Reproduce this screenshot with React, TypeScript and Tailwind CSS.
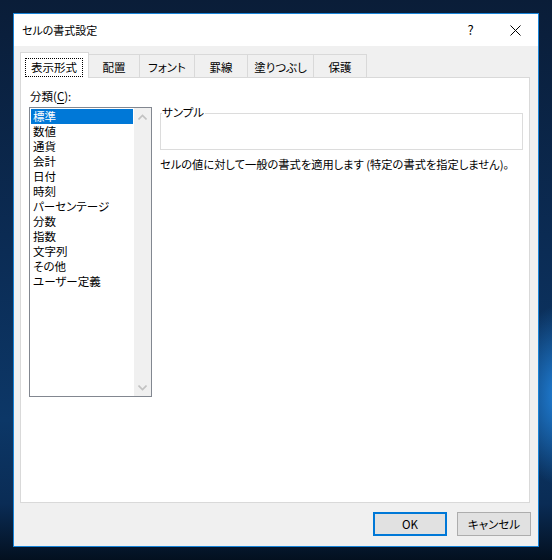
import React from "react";

const categories = [
  "標準",
  "数値",
  "通貨",
  "会計",
  "日付",
  "時刻",
  "パーセンテージ",
  "分数",
  "指数",
  "文字列",
  "その他",
  "ユーザー定義",
];

const tabs = [
  { label: "配置", w: "w-[51px]" },
  { label: "フォント", w: "w-[55px]" },
  { label: "罫線", w: "w-[53px]" },
  { label: "塗りつぶし", w: "w-[66px]" },
  { label: "保護", w: "w-[53px]" },
];

const Chevron: React.FC<{ down?: boolean }> = ({ down }) => (
  <svg width="9" height="6" viewBox="0 0 9 6" className="block">
    <polyline
      points={down ? "0.5,0.5 4.5,4.5 8.5,0.5" : "0.5,5.5 4.5,1.5 8.5,5.5"}
      fill="none"
      stroke="#c2c2c2"
      strokeWidth="1.6"
    />
  </svg>
);

const App: React.FC = () => {
  return (
    <div className="w-[552px] h-[560px] overflow-hidden pt-[13px] pl-[13px] bg-[image:radial-gradient(ellipse_50px_90px_at_560px_395px,#2080d8,transparent),linear-gradient(180deg,#0a1d38_0%,#0b2c55_45%,#0c3767_75%,#0a2c55_90%,#03101f_100%)] text-black text-[11.5px] font-['Noto_Sans_CJK_JP',sans-serif] [font-feature-settings:'palt']">
      <div className="w-[526px] h-[534px] border border-[#1883d7] bg-[#f0f0f0] flex flex-col">
        {/* title bar */}
        <div className="h-[32px] bg-white flex items-center">
          <span className="pl-[8px] leading-[15px] text-[11px]">セルの書式設定</span>
          <div className="ml-auto flex h-full">
            <div className="w-[45px] h-full flex items-center justify-center text-[13px]">?</div>
            <div className="w-[45px] h-full flex items-center justify-center">
              <svg width="11" height="11" viewBox="0 0 11 11">
                <line x1="0.5" y1="0.5" x2="10.5" y2="10.5" stroke="#000" strokeWidth="1" />
                <line x1="10.5" y1="0.5" x2="0.5" y2="10.5" stroke="#000" strokeWidth="1" />
              </svg>
            </div>
          </div>
        </div>

        {/* tabs + panel */}
        <div className="pl-[6px] pr-[8px] pt-[6px]">
          <div className="flex items-end">
            <div className="relative z-10 -mb-[1px] h-[26px] bg-white border-l border-t border-r border-[#d9d9d9] pt-[5px] pl-[4px] pr-[5px]">
              <div className="w-[58px] h-[19px] border border-dotted border-black flex items-center justify-center leading-[15px]">
                表示形式
              </div>
            </div>
            {tabs.map((t) => (
              <div
                key={t.label}
                className={`${t.w} h-[23px] border-t border-r border-[#d9d9d9] flex items-center justify-center pt-[2px] leading-[15px]`}
              >
                {t.label}
              </div>
            ))}
          </div>

          <div className="w-[510px] h-[426px] border border-[#d9d9d9] bg-white flex">
            {/* category column */}
            <div className="ml-[8px] flex flex-col">
              <div className="mt-[11px] pl-[1px] leading-[15px]">
                分類(<span className="underline underline-offset-2">C</span>):
              </div>
              <div className="mt-[3px] w-[123px] h-[290px] border border-[#828790] flex">
                <div className="flex-1 p-[1px]">
                  {categories.map((c, i) => (
                    <div
                      key={c}
                      className={
                        i === 0
                          ? "h-[15px] leading-[15px] pl-[2px] bg-[#0078d7] text-white"
                          : "h-[15px] leading-[15px] pl-[2px]"
                      }
                    >
                      {c}
                    </div>
                  ))}
                </div>
                <div className="w-[17px] bg-[#f0f0f0] flex flex-col justify-between">
                  <div className="h-[17px] flex items-center justify-center">
                    <Chevron />
                  </div>
                  <div className="h-[17px] flex items-center justify-center">
                    <Chevron down />
                  </div>
                </div>
              </div>
            </div>

            {/* sample + description */}
            <div className="ml-[8px] flex flex-col">
              <div className="relative mt-[35px] w-[363px] h-[37px] border border-[#dcdcdc]">
                <span className="absolute -top-[9px] left-[1px] bg-white pr-[1px] leading-[15px]">
                  サンプル
                </span>
              </div>
              <div className="mt-[7px] leading-[15px] whitespace-nowrap text-[11.25px]">
                セルの値に対して一般の書式を適用します (特定の書式を指定しません)。
              </div>
            </div>
          </div>
        </div>

        {/* buttons */}
        <div className="mt-[9px] pr-[7px] flex justify-end gap-[10px]">
          <button className="w-[74px] h-[24px] border-2 border-[#0078d7] bg-[#e1e1e1] leading-[15px]">
            OK
          </button>
          <button className="w-[74px] h-[24px] border border-[#adadad] bg-[#e1e1e1] leading-[15px]">
            キャンセル
          </button>
        </div>
      </div>
    </div>
  );
};

export default App;
